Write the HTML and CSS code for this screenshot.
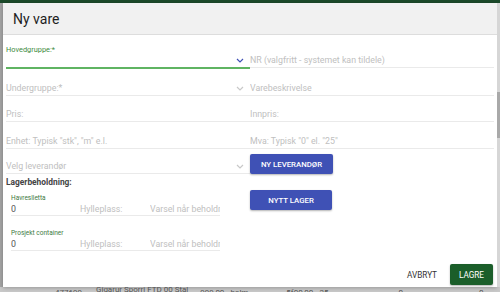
FILE: index.html
```html
<!DOCTYPE html>
<html lang="no">
<head>
    <meta charset="UTF-8">
    <meta name="viewport" content="width=device-width, initial-scale=1.0">
    <title>Ny vare</title>
    <link rel="stylesheet" href="styles.css">
</head>
<body>
    <div class="topbar"></div>
    <div class="stage">
        <div class="edge-left"></div>
        <div class="dialog">
            <div class="dialog-header">
                <h2>Ny vare</h2>
            </div>
            <form class="dialog-body">
                <div class="col">
                    <div class="field select active f1">
                        <label>Hovedgruppe:*</label>
                        <div class="control">
                            <span></span>
                            <svg class="chevron" viewBox="0 0 8 5" width="8" height="5"><path d="M1 1l3 3 3-3" fill="none" stroke="currentColor" stroke-width="1.2"/></svg>
                        </div>
                    </div>
                    <div class="field select f2">
                        <div class="control">
                            <span class="ph">Undergruppe:*</span>
                            <svg class="chevron" viewBox="0 0 8 5" width="8" height="5"><path d="M1 1l3 3 3-3" fill="none" stroke="currentColor" stroke-width="1.2"/></svg>
                        </div>
                    </div>
                    <div class="field f3"><input type="text" placeholder="Pris:"></div>
                    <div class="field f4"><input type="text" placeholder="Enhet: Typisk &quot;stk&quot;, &quot;m&quot; e.l."></div>
                    <div class="field select f5">
                        <div class="control">
                            <span class="ph">Velg leverandør</span>
                            <svg class="chevron" viewBox="0 0 8 5" width="8" height="5"><path d="M1 1l3 3 3-3" fill="none" stroke="currentColor" stroke-width="1.2"/></svg>
                        </div>
                    </div>
                    <div class="section-title">Lagerbeholdning:</div>
                    <div class="stock">
                        <div class="stock-name">Havreslletta</div>
                        <div class="stock-row">
                            <input type="text" value="0">
                            <input type="text" placeholder="Hylleplass:">
                            <input type="text" placeholder="Varsel når beholdning er under">
                        </div>
                    </div>
                    <div class="stock second">
                        <div class="stock-name">Prosjekt container</div>
                        <div class="stock-row">
                            <input type="text" value="0">
                            <input type="text" placeholder="Hylleplass:">
                            <input type="text" placeholder="Varsel når beholdning er under">
                        </div>
                    </div>
                </div>
                <div class="col">
                    <div class="field r1"><input type="text" placeholder="NR (valgfritt - systemet kan tildele)"></div>
                    <div class="field r2"><input type="text" placeholder="Varebeskrivelse"></div>
                    <div class="field r3"><input type="text" placeholder="Innpris:"></div>
                    <div class="field r4"><input type="text" placeholder="Mva: Typisk &quot;0&quot; el. &quot;25&quot;"></div>
                    <button type="button" class="btn-blue b1">Ny leverandør</button>
                    <button type="button" class="btn-blue b2">Nytt lager</button>
                </div>
            </form>
            <div class="dialog-footer">
                <button type="button" class="btn-flat">Avbryt</button>
                <button type="button" class="btn-green">Lagre</button>
            </div>
        </div>
        <div class="edge-right">
            <div class="thumb"></div>
        </div>
    </div>
    <div class="under">
        <span class="c1">477699</span>
        <span class="c2">Gigarur Sporrj FTD 00 Stal</span>
        <span class="c3">999,00 - balm</span>
        <span class="c4">5f</span>
        <span class="c5">00,00 - 25</span>
        <span class="c6">0</span>
        <span class="c7">0</span>
    </div>
</body>
</html>
```

FILE: styles.css
```css
body {
    margin: 0;
    width: 500px;
    height: 292px;
    overflow: hidden;
    background-color: #c9c9c9;
    font-family: Roboto, "Liberation Sans", Arial, sans-serif;
}

.topbar {
    height: 3px;
    background-color: #1c4a2a;
}

.stage {
    display: flex;
    height: 284px;
}

.edge-left {
    width: 3px;
    background-color: #a4a4a4;
}

.edge-right {
    flex: 1;
    background-color: #d6d6d6;
    padding-top: 89px;
}

.thumb {
    height: 46px;
    background-color: #a9a9a9;
}

.dialog {
    width: 494px;
    background: white;
    display: flex;
    flex-direction: column;
    box-shadow: 0 1px 4px rgba(0, 0, 0, 0.25);
}

.dialog-header {
    height: 31px;
    background-color: #f1f1f1;
    border-bottom: 1px solid #dddddd;
    display: flex;
    align-items: center;
    padding-left: 10px;
}

.dialog-header h2 {
    margin: 0;
    font-size: 14px;
    font-weight: 400;
    color: #1e1e1e;
}

.dialog-body {
    display: grid;
    grid-template-columns: 244px 244px;
    padding: 0 3px;
    margin: 0;
}

.col {
    display: flex;
    flex-direction: column;
    align-items: flex-start;
}

.field {
    width: 100%;
    border-bottom: 1px solid #eaeaea;
}

.field input,
.stock-row input {
    display: block;
    width: 100%;
    height: 14px;
    border: none;
    padding: 0;
    margin: 0;
    outline: none;
    background: transparent;
    font-family: Roboto, "Liberation Sans", Arial, sans-serif;
    font-size: 8.8px;
    color: #333;
}

.field input::placeholder,
.stock-row input::placeholder {
    color: #c0c0c0;
}

.control {
    height: 14px;
    display: flex;
    align-items: center;
    justify-content: space-between;
    padding-right: 6px;
}

.ph {
    font-size: 8.8px;
    color: #c0c0c0;
}

.chevron {
    color: #c8c8c8;
}

.field.active {
    border-bottom: 2px solid #5fb462;
}

.field.active label {
    display: block;
    height: 9px;
    line-height: 9px;
    font-size: 7.4px;
    color: #3d8b40;
}

.field.active .control {
    height: 13px;
}

.field.active .chevron {
    color: #3f51b5;
}

.f1 { margin-top: 10px; }
.f2 { margin-top: 12px; }
.f3 { margin-top: 11px; }
.f4 { margin-top: 12px; }
.f5 { margin-top: 10px; }

.r1 { margin-top: 18px; }
.r2 { margin-top: 13px; }
.r3 { margin-top: 11px; }
.r4 { margin-top: 12px; }

.section-title {
    margin-top: 3px;
    height: 10px;
    line-height: 10px;
    font-size: 8.4px;
    font-weight: bold;
    color: #444;
}

.stock {
    margin-top: 7px;
    margin-left: 5px;
    width: 209px;
}

.stock.second {
    margin-top: 13px;
}

.stock-name {
    height: 8px;
    line-height: 8px;
    font-size: 6.5px;
    color: #3d7a3f;
}

.stock-row {
    display: grid;
    grid-template-columns: 69px 70px 70px;
    border-bottom: 1px solid #eaeaea;
    height: 13px;
    align-items: center;
}

.stock-row input {
    height: 13px;
    color: #555;
}

.btn-blue {
    height: 20px;
    border: none;
    border-radius: 2px;
    background-color: #3f51b5;
    color: white;
    font-family: Roboto, "Liberation Sans", Arial, sans-serif;
    font-size: 7.8px;
    font-weight: 500;
    text-transform: uppercase;
    padding: 0;
    box-shadow: 0 1px 2px rgba(0, 0, 0, 0.3);
}

.b1 {
    margin-top: 5px;
    width: 83px;
}

.b2 {
    margin-top: 16px;
    width: 82px;
}

.dialog-footer {
    margin-top: auto;
    display: flex;
    justify-content: flex-end;
    align-items: center;
    gap: 7px;
    padding: 0 4px 2px 0;
}

.btn-flat,
.btn-green {
    height: 21px;
    border: none;
    border-radius: 2px;
    font-family: Roboto, "Liberation Sans", Arial, sans-serif;
    font-size: 8.2px;
    font-weight: 400;
    text-transform: uppercase;
    padding: 0 6px;
}

.btn-flat {
    background: transparent;
    color: #333;
}

.btn-green {
    width: 43px;
    background-color: #1b5e2a;
    color: white;
    box-shadow: 0 1px 2px rgba(0, 0, 0, 0.3);
}

.under {
    height: 5px;
    overflow: hidden;
    display: flex;
    font-size: 8px;
    line-height: 10px;
    color: #555;
    white-space: nowrap;
}

.under span {
    margin-top: 1px;
}

.c1 { margin-left: 55px; }
.c2 { margin-left: 14px; margin-top: -2px !important; }
.c3 { margin-left: 12px; }
.c4 { margin-left: 38px; }
.c5 { margin-left: 0; }
.c6 { margin-left: 70px; }
.c7 { margin-left: 76px; }
```
